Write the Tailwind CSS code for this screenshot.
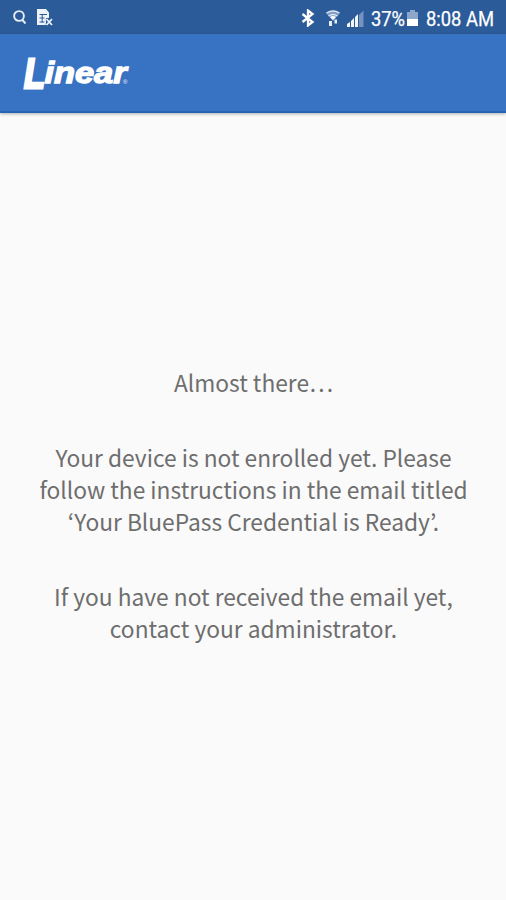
<!DOCTYPE html>
<html lang="en">
<head>
  <meta charset="UTF-8" />
  <meta name="viewport" content="width=device-width, initial-scale=1.0" />
  <title>Linear BluePass</title>
  <script src="https://cdn.jsdelivr.net/npm/@tailwindcss/browser@4"></script>
</head>
<body class="h-screen flex flex-col overflow-hidden bg-[#fafafa] text-[#6e6e6e]">
  <!-- Status bar -->
  <div class="h-[34px] shrink-0 flex items-center justify-between bg-[#2c5b9a] pl-3 pr-1.5 text-white">
    <div class="flex items-center gap-2.5">
      <svg class="w-4 h-4" viewBox="0 0 16 16" fill="none" stroke="#e6edf6" stroke-width="1.9"><circle cx="7" cy="7" r="4.9"/><path d="M10 10.500l3.500 4"/></svg>
      <svg class="w-4 h-[18px] -ml-[1px]" viewBox="0 0 16 18"><path d="M0 1h9l3 3.500V10H9v7H0z" fill="#eef3fa"/><path d="M2.500 6.500h7.500M2.500 10h5M2.500 14h5M5.200 6.500v8" stroke="#2c5b9a" stroke-width="1" fill="none"/><path d="M9.500 11l5.500 6M15 11l-5.500 6" stroke="#2c5b9a" stroke-width="3"/><path d="M9.500 11l5.500 6M15 11l-5.500 6" stroke="#eef3fa" stroke-width="1.800"/></svg>
    </div>
    <div class="flex items-center">
      <svg class="w-[14px] h-[18px] mt-0.5" viewBox="0 0 14 18" fill="none" stroke="#fff" stroke-width="2.300"><path d="M1.500 5l10 8L7 16.500V1.500l4.500 3.500-10 8"/></svg>
      <svg class="w-[16px] h-[18px] ml-2.5 mt-0.5" viewBox="0 0 16 18"><path d="M1 4Q8-1 15 4L8 12z" fill="#7f9dc4"/><path d="M1.500 4Q8 0 14.500 4M3.500 7Q8 4 12.500 7" fill="none" stroke="#dce6f2" stroke-width="1.400"/><path d="M5 8Q8 6 11 8L8 11z" fill="#fff"/><path d="M4 12h3v5H4zM9.500 10.500h2.500v4H9.500z" fill="#e8eef7"/></svg>
      <svg class="w-[17px] h-[17px] ml-1.5 mt-0.5" viewBox="0 0 17 17"><path d="M0 17v-3l3-2v5zM4 17v-6l3-3v9zM8 17V7l3-3v13z" fill="#f2f6fb"/><path d="M12 17V5l4.500-4.500V17z" fill="#7494bf"/></svg>
      <svg class="w-[136px] h-[32px]" viewBox="0 0 136 32" fill="#fff" stroke="#fff" stroke-width="0.250" font-family="Roboto, sans-serif" font-size="21">
        <text x="7" y="25" textLength="34" lengthAdjust="spacingAndGlyphs">37%</text>
        <path d="M46 9h5v2h3v7H43v-7h3z" fill="#8ba7ca" stroke="none"/><path d="M43 18h11v7H43z" stroke="none"/>
        <text x="62" y="25" textLength="68" lengthAdjust="spacingAndGlyphs">8:08 AM</text>
      </svg>
    </div>
  </div>

  <!-- App bar -->
  <header class="h-[79px] shrink-0 flex items-center bg-[#3872c3] border-b-2 border-[#2563b3] shadow-[0_1px_3px_rgba(0,0,0,0.3)] pl-4">
    <svg class="w-[124px] h-[60px]" viewBox="0 0 124 60" fill="#fff" stroke="#fff" font-family="'Liberation Sans', sans-serif" font-weight="bold" font-style="italic">
      <text><tspan x="8" y="44.500" font-size="43" stroke-width="2.800" textLength="21" lengthAdjust="spacingAndGlyphs">L</tspan><tspan x="28.500" y="40" font-size="29.500" stroke-width="1.300" textLength="82" lengthAdjust="spacingAndGlyphs">inear</tspan><tspan x="107" y="41" font-size="6" stroke="none" font-style="normal" font-weight="normal">®</tspan></text>
    </svg>
  </header>

  <!-- Message -->
  <main class="flex-1 pt-[254px] pl-px text-center font-['Noto_Sans_CJK_KR',sans-serif] text-[22.75px] leading-8 whitespace-nowrap">
    <p>Almost there…</p>
    <p class="mt-[43px]">Your device is not enrolled yet. Please<br />follow the instructions in the email titled<br />‘Your BluePass Credential is Ready’.</p>
    <p class="mt-[43px]">If you have not received the email yet,<br />contact your administrator.</p>
  </main>
</body>
</html>
